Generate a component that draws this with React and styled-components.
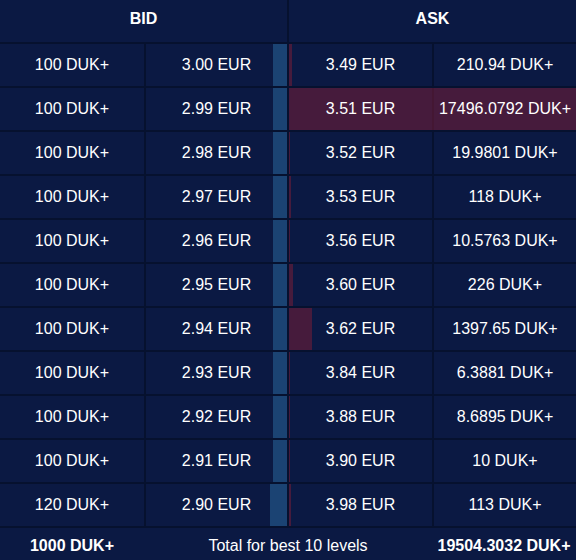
import React from 'react'
import styled, { createGlobalStyle } from 'styled-components'

const GlobalStyle = createGlobalStyle`
  html, body {
    margin: 0;
    padding: 0;
    background: #06112f;
  }
  * {
    box-sizing: border-box;
  }
`

const bids = [
  { qty: 100, price: '3.00' },
  { qty: 100, price: '2.99' },
  { qty: 100, price: '2.98' },
  { qty: 100, price: '2.97' },
  { qty: 100, price: '2.96' },
  { qty: 100, price: '2.95' },
  { qty: 100, price: '2.94' },
  { qty: 100, price: '2.93' },
  { qty: 100, price: '2.92' },
  { qty: 100, price: '2.91' },
  { qty: 120, price: '2.90' },
]

const asks = [
  { qty: '210.94', price: '3.49' },
  { qty: '17496.0792', price: '3.51' },
  { qty: '19.9801', price: '3.52' },
  { qty: '118', price: '3.53' },
  { qty: '10.5763', price: '3.56' },
  { qty: '226', price: '3.60' },
  { qty: '1397.65', price: '3.62' },
  { qty: '6.3881', price: '3.84' },
  { qty: '8.6895', price: '3.88' },
  { qty: '10', price: '3.90' },
  { qty: '113', price: '3.98' },
]

const maxAsk = Math.max(...asks.map(a => parseFloat(a.qty)))

function OrderBook() {
  return (
    <Book>
      <HeadRow>
        <HeadCell>BID</HeadCell>
        <HeadCell>ASK</HeadCell>
      </HeadRow>

      {bids.map((bid, i) => {
        const ask = asks[i]
        const askWidth = Math.max(1, (parseFloat(ask.qty) / maxAsk) * 287)
        return (
          <Row key={i}>
            <BidHalf>
              <Cell><Label>{bid.qty} DUK+</Label></Cell>
              <Cell>
                <Label>{bid.price} EUR</Label>
                <BidBar style={{ width: Math.round(bid.qty * 0.142) }} />
              </Cell>
            </BidHalf>
            <AskHalf>
              <AskBar style={{ width: Math.round(askWidth) }} />
              <Cell><Label>{ask.price} EUR</Label></Cell>
              <Cell><Label>{ask.qty} DUK+</Label></Cell>
            </AskHalf>
          </Row>
        )
      })}

      <Footer>
        <FooterCell bold>1000 DUK+</FooterCell>
        <FooterCell>Total for best 10 levels</FooterCell>
        <FooterCell bold>19504.3032 DUK+</FooterCell>
      </Footer>
    </Book>
  )
}

export default function App() {
  return (
    <>
      <GlobalStyle />
      <OrderBook />
    </>
  )
}

const Book = styled.div`
width: 576px;
height: 560px;
display: flex;
flex-direction: column;
gap: 2px;
background: #06112f;
font-family: "Liberation Sans", Arial, sans-serif;
font-size: 16px;
color: #ffffff;
overflow: hidden;
`

const HeadRow = styled.div`
display: grid;
grid-template-columns: 287px 287px;
column-gap: 2px;
height: 42px;
`

const HeadCell = styled.div`
background: #0b1943;
display: flex;
align-items: center;
justify-content: center;
font-weight: bold;
padding-bottom: 4px;
`

const Row = styled.div`
display: grid;
grid-template-columns: 287px 287px;
column-gap: 2px;
height: 42px;
`

const BidHalf = styled.div`
display: grid;
grid-template-columns: 144px 141px;
column-gap: 2px;
`

const AskHalf = styled.div`
position: relative;
display: grid;
grid-template-columns: 143px 142px;
column-gap: 2px;
`

const Cell = styled.div`
position: relative;
background: #0b1943;
display: flex;
align-items: center;
justify-content: center;
padding-bottom: 1px;
white-space: nowrap;
`

const Label = styled.span`
position: relative;
z-index: 2;
`

const BidBar = styled.div`
position: absolute;
top: 0;
right: 0;
bottom: 0;
background: #1b4373;
`

const AskBar = styled.div`
position: absolute;
top: 0;
left: 0;
bottom: 0;
background: rgba(120, 30, 55, 0.55);
z-index: 1;
pointer-events: none;
`

const Footer = styled.div`
flex: 1;
display: grid;
grid-template-columns: 144px 288px 144px;
background: #0b1943;
padding-top: 3px;
`

const FooterCell = styled.div`
display: flex;
align-items: center;
justify-content: center;
font-weight: ${props => (props.bold ? 'bold' : 'normal')};
white-space: nowrap;
`
